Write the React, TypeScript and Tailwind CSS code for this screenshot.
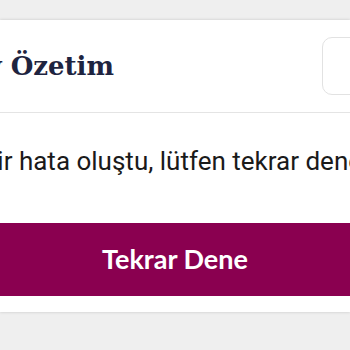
export default function App() {
  return (
    <div className="h-[350px] w-[350px] overflow-hidden bg-[#efefef] pt-[20px]">
      <div className="bg-white shadow-[0_0_3px_rgba(0,0,0,0.18)]">
        <div className="flex h-[93px] items-center border-b border-[#e4e4e4]">
          <div className="flex w-[114px] shrink-0 justify-end whitespace-nowrap">
            <h2 className="font-['DejaVu_Serif',serif] text-[26px] font-bold leading-none text-[#1e2440]">
              Portföy Özetim
            </h2>
          </div>
          <div className="-mr-[30px] ml-auto h-[58px] w-[58px] shrink-0 rounded-[10px] border border-[#e2e2e2]" />
        </div>
        <div className="flex h-[110px] items-center justify-center whitespace-nowrap pb-[14px]">
          <p className="font-['Roboto',sans-serif] text-[26px] text-[#1a1a1a]">
            Bir hata oluştu, lütfen tekrar dene.
          </p>
        </div>
        <div className="pb-[16px]">
          <button
            type="button"
            className="flex h-[73px] w-full items-center justify-center bg-[#8a0050] font-['Lato',sans-serif] text-[27px] font-bold text-white"
          >
            Tekrar Dene
          </button>
        </div>
      </div>
    </div>
  );
}
